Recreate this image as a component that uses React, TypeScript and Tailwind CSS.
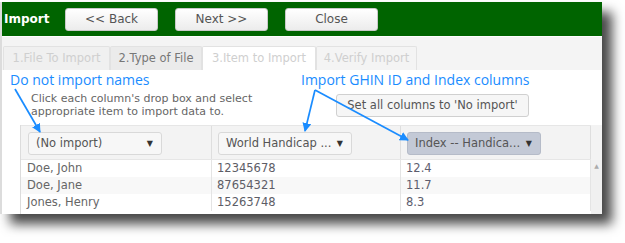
const tabs = [
  { label: "1.File To Import", w: "w-[107px]", cls: "bg-[#f0f0f0] text-[#cfcfcf]" },
  { label: "2.Type of File", w: "w-[92px]", cls: "bg-[#ebebeb] text-[#777]" },
  { label: "3.Item to Import", w: "w-[114px]", cls: "bg-white text-[#cfcfcf]" },
  { label: "4.Verify Import", w: "w-[101px]", cls: "bg-[#f4f4f4] text-[#cfcfcf]" },
];

const rows = [
  { name: "Doe, John", id: "12345678", index: "12.4" },
  { name: "Doe, Jane", id: "87654321", index: "11.7" },
  { name: "Jones, Henry", id: "15263748", index: "8.3" },
];

const HeaderButton = ({ label }: { label: string }) => (
  <button className="w-[93px] h-[23px] rounded-[3px] border border-[#c9c9c9] bg-gradient-to-b from-white to-[#ececec] text-[12px] text-[#555]">
    {label}
  </button>
);

const Dropdown = ({ label, active }: { label: string; active?: boolean }) => (
  <div
    className={
      "w-[134px] h-[23px] rounded-[3px] border flex items-center justify-between pl-[7px] pr-[8px] text-[11.5px] text-[#555] " +
      (active ? "bg-[#c3c9d6] border-[#b5bbc8]" : "bg-[#f7f7f7] border-[#d9d9d9]")
    }
  >
    <span>{label}</span>
    <span className="text-[8px] text-[#333]">▼</span>
  </div>
);

export default function App() {
  return (
    <div className="w-[625px] h-[243px] bg-white relative pt-[2px] font-['DejaVu_Sans',sans-serif]">
      <div className="w-[602px] h-[212px] flex flex-col border-l-2 border-[#dcdcdc] shadow-[10px_10px_11px_rgba(0,0,0,0.72)]">
        {/* title bar */}
        <div className="h-[34px] bg-[#006400] flex items-center pl-[2px] gap-[17px]">
          <span className="w-[44px] text-white font-bold text-[12px]">Import</span>
          <HeaderButton label="<< Back" />
          <HeaderButton label="Next >>" />
          <HeaderButton label="Close" />
        </div>

        {/* tab strip */}
        <div className="h-[34px] bg-[#f4f4f4] border-t border-white flex items-end pl-px">
          {tabs.map((t) => (
            <div
              key={t.label}
              className={`${t.w} h-[24px] border border-b-0 border-[#e2e2e2] rounded-t-[2px] flex items-center justify-center text-[11.5px] ${t.cls}`}
            >
              {t.label}
            </div>
          ))}
        </div>

        {/* content */}
        <div className="flex-1 bg-white flex flex-col">
          <div className="h-[55px] flex">
            <div className="w-[299px] pl-[8px]">
              <div className="h-[20px] text-[14px] leading-[20px] text-[#1a8cff] font-['Open_Sans',sans-serif]">
                Do not import names
              </div>
              <div className="pl-[21px] pt-[2px] text-[11px] leading-[13px] text-[#666]">
                <div>Click each column's drop box and select</div>
                <div>appropriate item to import data to.</div>
              </div>
            </div>
            <div className="flex-1 flex flex-col">
              <div className="h-[20px] text-[14px] leading-[20px] text-[#1a8cff] font-['Open_Sans',sans-serif]">
                Import GHIN ID and Index columns
              </div>
              <div className="pl-[35px] pt-[2px]">
                <button className="w-[193px] h-[23px] rounded-[3px] border border-[#d0d0d0] bg-[#f6f6f6] text-[11.5px] text-[#555]">
                  Set all columns to 'No import'
                </button>
              </div>
            </div>
          </div>

          {/* grid */}
          <div className="ml-[18px] flex-1 flex border-l border-[#dcdcdc]">
            <div className="flex-1 flex flex-col">
              <div className="h-[35px] bg-[#f3f3f3] border-t border-b border-[#e6e6e6] grid grid-cols-[191px_189px_190px]">
                <div className="border-r border-[#dedede] pl-[7px] pt-[6px]">
                  <Dropdown label="(No import)" />
                </div>
                <div className="border-r border-[#dedede] pl-[6px] pt-[6px]">
                  <Dropdown label="World Handicap ..." />
                </div>
                <div className="border-r border-[#dedede] pl-[6px] pt-[6px]">
                  <Dropdown label="Index -- Handica..." active />
                </div>
              </div>
              {rows.map((r, i) => (
                <div
                  key={r.name}
                  className={`h-[17px] grid grid-cols-[191px_189px_190px] text-[11.5px] leading-[17px] ${i === 1 ? "bg-[#f8f8f8]" : "bg-white"}`}
                >
                  <div className="border-r border-[#e4e4e4] pl-[6px] text-[#666]">{r.name}</div>
                  <div className="border-r border-[#e4e4e4] pl-[5px] text-[#5d5d66]">{r.id}</div>
                  <div className="border-r border-[#e4e4e4] pl-[5px] text-[#5d5d6e]">{r.index}</div>
                </div>
              ))}
            </div>
            <div className="w-[12px] bg-[#f0f0f0] flex flex-col">
              <div className="h-[35px] bg-[#f3f3f3]" />
              <div className="text-[6px] text-[#aaa] text-center leading-[12px]">▲</div>
            </div>
          </div>
        </div>
      </div>

      {/* annotation arrows */}
      <svg className="absolute left-0 top-0 pointer-events-none" width="625" height="243">
        <defs>
          <marker id="ah" markerWidth="9" markerHeight="9" refX="8" refY="4.5" orient="auto" markerUnits="userSpaceOnUse">
            <path d="M0,0 L9,4.5 L0,9 z" fill="#1a8cff" />
          </marker>
        </defs>
        <g stroke="#1a8cff" strokeWidth="1.7" fill="none">
          <line x1="15" y1="89" x2="40" y2="132" markerEnd="url(#ah)" />
          <line x1="315" y1="90" x2="305" y2="131" markerEnd="url(#ah)" />
          <line x1="315" y1="90" x2="408" y2="140" markerEnd="url(#ah)" />
        </g>
      </svg>
    </div>
  );
}
